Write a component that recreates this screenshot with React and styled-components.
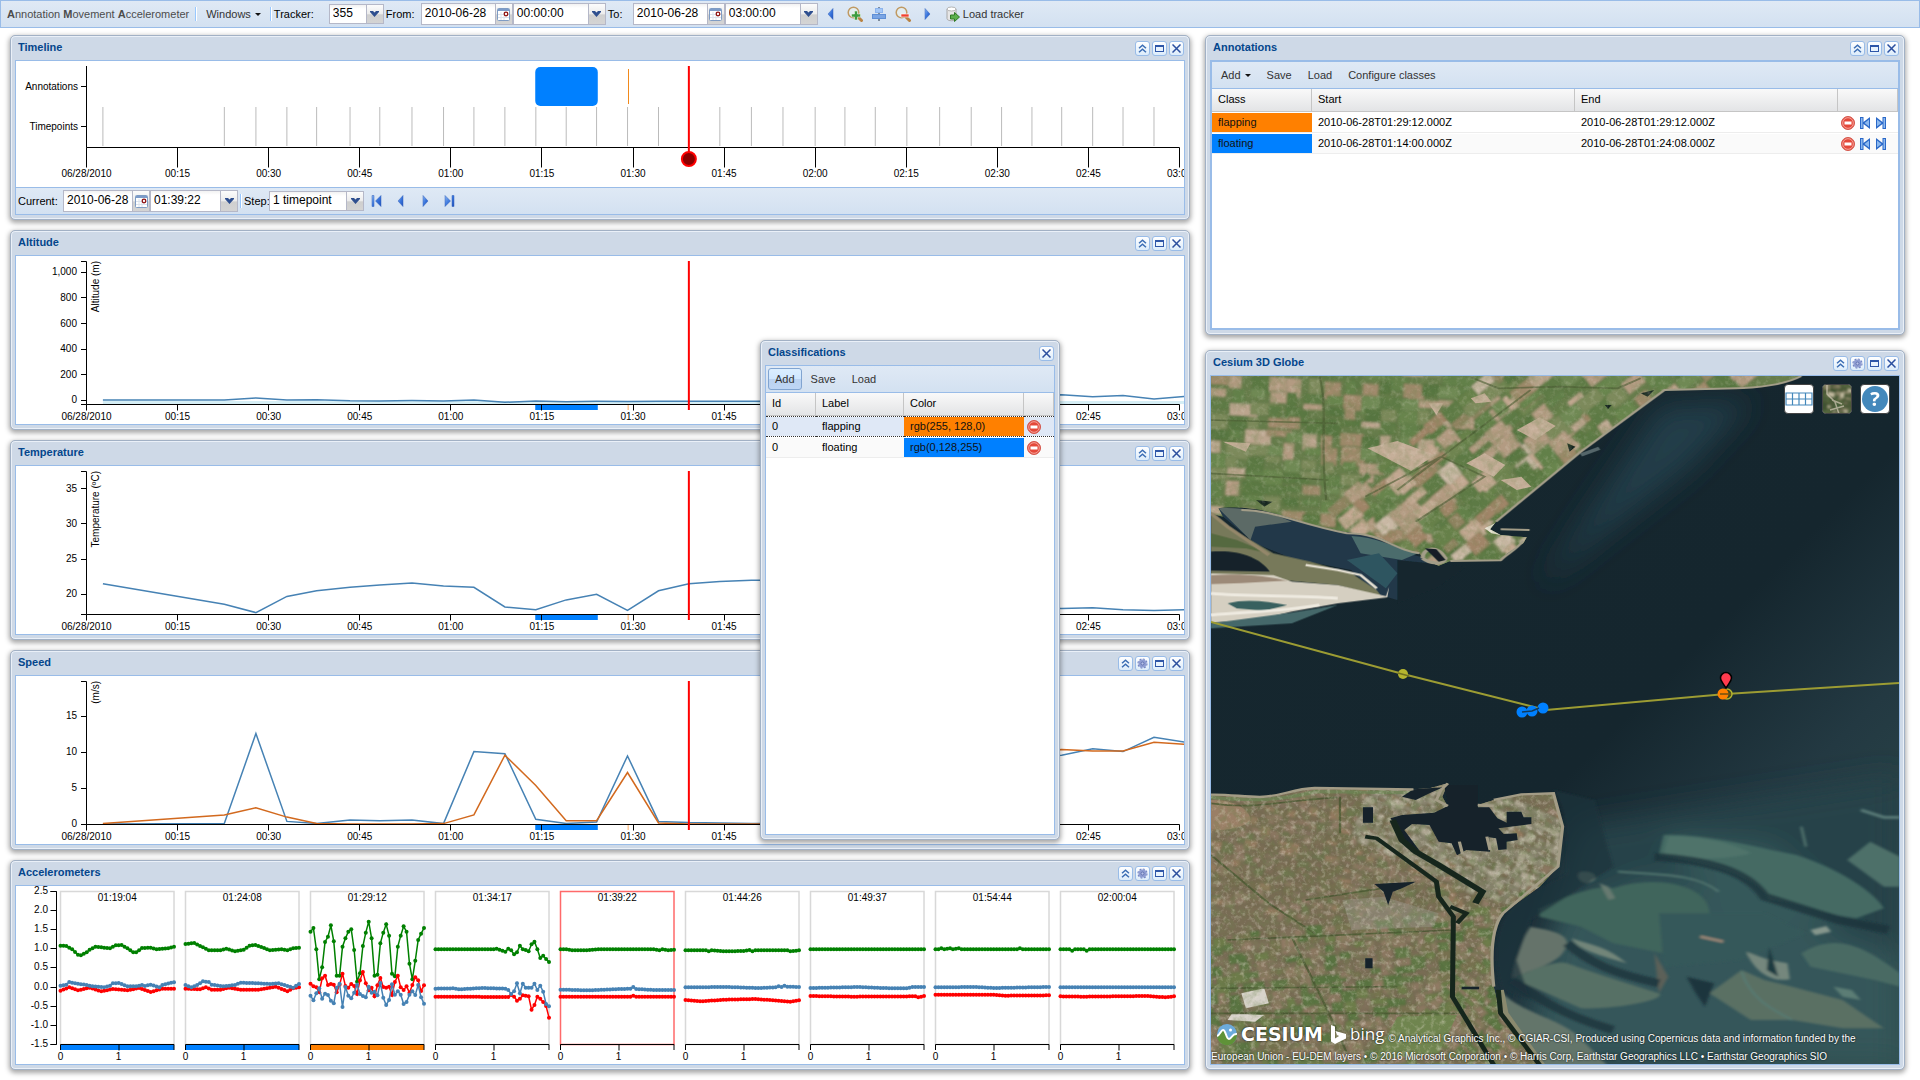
import React from "react";
import styled, { createGlobalStyle, css } from "styled-components";

/* ---------- shared styles ---------- */

const GlobalStyle = createGlobalStyle`
  *, *::before, *::after { box-sizing: border-box; }
  body { margin: 0; background: #fff; }
  body, button, input, select, table {
    font-family: "Liberation Sans", Arial, Helvetica, sans-serif;
    font-size: 11px;
    color: #000;
  }
  button { padding: 0; border: 0; background: none; cursor: pointer; }
  svg { display: block; flex: none; }
  svg text { font-family: "Liberation Sans", Arial, Helvetica, sans-serif; }
`;

const Page = styled.div`
  position: relative;
  min-height: 100vh;
`;

const Desktop = styled.main`
  display: grid;
  grid-template-columns: 59fr 35fr;
  gap: 15px;
  padding: 7px 15px 10px 10px;
`;

const Column = styled.div`
  display: flex;
  flex-direction: column;
  gap: ${(p) => p.$gap};
  min-width: 0;
`;

const Bar = styled.div`
  display: flex;
  align-items: center;
  gap: 2px;
  height: ${(p) => p.$height};
  padding: 0 2px;
  background: linear-gradient(#dfe9f5, #d3e1f1);
`;

const MainBar = styled(Bar)`
  border: 1px solid #99bce8;
  padding-left: 6px;
`;

const PanelBar = styled(Bar)`
  border-bottom: 1px solid #99bce8;
`;

const FooterBar = styled(Bar)`
  border-top: 1px solid #99bce8;
`;

const Brand = styled.span`
  color: #4c4c4c;
  margin-right: 4px;
  white-space: nowrap;
`;

const Divider = styled.span`
  width: 2px;
  height: 14px;
  border-left: 1px solid #98c8ff;
  border-right: 1px solid #fff;
`;

const BarButton = styled.button`
  display: inline-flex;
  align-items: center;
  gap: 4px;
  height: 22px;
  padding: 0 6px;
  color: #333;
  border: 1px solid transparent;
  border-radius: 3px;
  white-space: nowrap;
  ${(p) =>
    p.$pressed &&
    css`
      border-color: #81a4d0;
      background: linear-gradient(#dbeeff, #d0e7ff 48%, #bbd2f0 52%, #bed6f5);
    `}
`;

const LoadButton = styled(BarButton)`
  gap: 2px;
  padding: 0 4px;
`;

const IconButton = styled.button`
  display: inline-flex;
  align-items: center;
  justify-content: center;
  width: 22px;
  height: 22px;
`;

const FieldLabel = styled.label`
  width: ${(p) => p.$width};
  white-space: nowrap;
`;

const FieldBox = styled.span`
  display: flex;
  width: ${(p) => p.$width};
  height: ${(p) => (p.$compact ? "20px" : "22px")};
  background: #fff;
  border: 1px solid #b5b8c8;
  position: relative;

  input, select {
    flex: 1;
    min-width: 0;
    width: 100%;
    height: 100%;
    padding: 0 0 2px 3px;
    border: 0;
    border-radius: 0;
    outline: 0;
    background: linear-gradient(#f2f2f2, #fff 4px);
    font-size: 12px;
    appearance: none;
  }
`;

const triggerFace = css`
  display: flex;
  align-items: center;
  justify-content: center;
  width: 17px;
  border-left: 1px solid #b5b8c8;
  background: linear-gradient(#fcfcfc, #ececec 50%, #cfcfcf 54%, #d4d4d4);
`;

const SelectTrigger = styled.span`
  ${triggerFace}
  position: absolute;
  top: 0;
  right: 0;
  bottom: 0;
  pointer-events: none;
`;

const DateTrigger = styled.button`
  ${triggerFace}
`;

const WindowBox = styled.section`
  display: flex;
  flex-direction: column;
  padding: 0 4px 4px;
  background: #ced9e7;
  border: 1px solid #a2b1c5;
  border-radius: 5px;
  box-shadow: inset 0 0 0 1px #eaf0f8, 0 2px 5px 1px rgba(0, 0, 0, 0.35);
  ${(p) => p.$height && `height: ${p.$height};`}
`;

const FloatingWindow = styled(WindowBox)`
  position: absolute;
  left: 760px;
  top: 340px;
  width: 300px;
`;

const WindowHeader = styled.header`
  display: flex;
  align-items: center;
  justify-content: space-between;
  height: 24px;
  padding: 0 1px 0 3px;
`;

const WindowTitle = styled.h2`
  margin: 0;
  padding-bottom: 2px;
  font-size: 11px;
  line-height: 15px;
  font-weight: bold;
  color: #04468c;
`;

const ToolRow = styled.div`
  display: flex;
  gap: 2px;
`;

const ToolButton = styled.button`
  display: flex;
  align-items: center;
  justify-content: center;
  width: 15px;
  height: 15px;
  border: 1px solid #99bce8;
  border-radius: 3px;
  background: linear-gradient(#fff, #dcecfb);
`;

const WindowBody = styled.div`
  flex: 1;
  display: flex;
  flex-direction: column;
  min-height: 0;
  border: ${(p) => (p.$nested ? "2px" : "1px")} solid #99bce8;
  background: #fff;
`;

const ChartSvg = styled.svg`
  width: 100%;
  height: auto;
  overflow: hidden;
`;

/* ---------- icons ---------- */

const CaretDown = () => (
  <svg width="6" height="3" viewBox="0 0 6 3"><path d="M0 0h6L3 3z" fill="#111" /></svg>
);

const TriggerArrow = () => (
  <svg width="9" height="6" viewBox="0 0 9 6">
    <path d="M0 0h3l1.500 1.500L6 0h3v1L4.500 6 0 1z" fill="#2f4f8f" />
  </svg>
);

const CalendarIcon = () => (
  <svg width="13" height="13" viewBox="0 0 13 13">
    <rect x=".5" y=".5" width="12" height="12" rx="1" fill="#fff" stroke="#7f9cc4" />
    <path d="M1 1h11v2H1z" fill="#7d9cc9" />
    <path d="M4 4v8M7 4v8M1 6.500h11M1 9.500h11" stroke="#dbe2ec" />
    <circle cx="9" cy="6" r="1.800" fill="#fff" stroke="#8e1010" strokeWidth="1.300" />
  </svg>
);

const NAV_SHAPES = {
  prev: "M8 .5v11L3 6z",
  next: "M4 .5v11L9 6z",
  first: "M1 .5h2v11H1zM10 .5v11L4.500 6z",
  last: "M9 .5h2v11H9zM2 .5v11L7.500 6z",
};

const NavIcon = ({ kind }) => (
  <svg width="12" height="12" viewBox="0 0 12 12">
    <linearGradient id={`nav-${kind}`} x1="0" x2="1" y1="0" y2="1">
      <stop offset="0" stopColor="#8db8f4" />
      <stop offset=".5" stopColor="#3a76dd" />
      <stop offset="1" stopColor="#1d50bd" />
    </linearGradient>
    <path d={NAV_SHAPES[kind]} fill={`url(#nav-${kind})`} stroke="#3560b8" strokeWidth=".5" />
  </svg>
);

const RowNavIcon = ({ flip }) => (
  <svg width="12" height="12" viewBox="0 0 12 12">
    <g transform={flip ? "matrix(-1 0 0 1 12 0)" : undefined}>
      <path d="M1 0h3.500v5L11 0v12L4.500 7v5H1z" fill="#2a68c8" />
      <path d="M2 1h1.500v10H2zM10 2.500v7L5.500 6z" fill="#8db9ef" />
    </g>
  </svg>
);

const ZoomIcon = ({ minus }) => (
  <svg width="16" height="16" viewBox="0 0 16 16">
    <path d="M10 10l4.500 4.500" stroke="#b98343" strokeWidth="3" strokeLinecap="round" />
    <circle cx="6.500" cy="6.500" r="5.300" fill="#e3edf0" stroke="#c09a63" strokeWidth="1.500" />
    {minus ? (
      <path d="M6 8h8v3H6z" fill="#f0432f" stroke="#fff" strokeWidth=".6" />
    ) : (
      <path d="M7.500 5h3v3h3v3h-3v3h-3v-3h-3V8h3z" fill="#3d9b3f" stroke="#e5f2e5" strokeWidth=".6" />
    )}
  </svg>
);

const CenterIcon = () => (
  <svg width="14" height="14" viewBox="0 0 14 14">
    <path d="M7 0v14" stroke="#234" />
    <rect x="3.500" y="1.500" width="7" height="4" fill="#a5c8f7" stroke="#8db4ec" />
    <rect x=".5" y="7.500" width="13" height="4" fill="#7aa5e4" stroke="#5f8fd6" />
  </svg>
);

const DatabaseGoIcon = () => (
  <svg width="16" height="16" viewBox="0 0 16 16">
    <path d="M2 3v9.500c0 3 9 3 9 0V3z" fill="#e6e6e6" stroke="#a8a8a8" />
    <ellipse cx="6.500" cy="3" rx="4.500" ry="2" fill="#fff" stroke="#b4b4b4" />
    <path d="M5.500 9h4V6.500l5 4.500-5 4.500V13h-4z" fill="#5cb04c" stroke="#2f7a25" />
  </svg>
);

const DeleteIcon = () => (
  <svg width="14" height="14" viewBox="0 0 14 14">
    <circle cx="7" cy="7" r="6.500" fill="#e4483a" stroke="#d3574c" />
    <circle cx="7" cy="7" r="5.300" fill="none" stroke="#f5a49b" />
    <rect x="3.500" y="5.500" width="7" height="3" fill="#fff" />
  </svg>
);

const TOOL_ICONS = {
  collapse: (
    <svg width="9" height="9" viewBox="0 0 9 9">
      <path d="M1 4.200l3.500-3 3.500 3M1 8.200l3.500-3 3.500 3" fill="none" stroke="#3b6db4" strokeWidth="1.500" />
    </svg>
  ),
  settings: (
    <svg width="11" height="11" viewBox="0 0 11 11">
      <circle cx="5.500" cy="5.500" r="4.500" fill="none" stroke="#7384c2" strokeWidth="1.200" strokeDasharray="2 1.500" />
      <circle cx="5.500" cy="5.500" r="4" fill="#8f9dd2" />
      <circle cx="5.500" cy="5.500" r="1.500" fill="#b9c3e8" stroke="#5868a8" strokeWidth=".8" />
    </svg>
  ),
  maximize: (
    <svg width="9" height="7" viewBox="0 0 9 7">
      <rect x=".5" y=".5" width="8" height="6" fill="#e9f3fd" stroke="#2e56a8" />
      <path d="M0 0h9v2H0z" fill="#2e56a8" />
    </svg>
  ),
  close: (
    <svg width="9" height="9" viewBox="0 0 9 9">
      <path d="M.5.5l8 8M8.500.5l-8 8" stroke="#2b4f9f" strokeWidth="1.500" />
    </svg>
  ),
};

/* ---------- windows and fields ---------- */

const WINDOW_TOOLS = ["collapse", "maximize", "close"];
const CONFIGURABLE_TOOLS = ["collapse", "settings", "maximize", "close"];

const Window = ({ title, tools = WINDOW_TOOLS, nested, height, as: Frame = WindowBox, children }) => (
  <Frame $height={height} aria-label={title}>
    <WindowHeader>
      <WindowTitle>{title}</WindowTitle>
      <ToolRow>
        {tools.map((tool) => (
          <ToolButton key={tool} aria-label={tool}>{TOOL_ICONS[tool]}</ToolButton>
        ))}
      </ToolRow>
    </WindowHeader>
    <WindowBody $nested={nested}>{children}</WindowBody>
  </Frame>
);

const Combo = ({ id, label, value, width, compact }) => (
  <FieldBox $width={width} $compact={compact}>
    <select id={id} aria-label={label} defaultValue={value}>
      <option>{value}</option>
    </select>
    <SelectTrigger><TriggerArrow /></SelectTrigger>
  </FieldBox>
);

const DateField = ({ id, value, width }) => (
  <FieldBox $width={width}>
    <input id={id} type="text" defaultValue={value} />
    <DateTrigger aria-label="Pick a date"><CalendarIcon /></DateTrigger>
  </FieldBox>
);

const FieldPair = styled.span`
  display: flex;
`;

/* ---------- time axis ---------- */

const CHART_WIDTH = 1168;
const AXIS_X = 70.5;
const AXIS_END = 1163.5;
const xAt = (minutes) => AXIS_X + (minutes * (AXIS_END - AXIS_X)) / 180;
const clock = (m) => `0${Math.floor(m / 60)}:${m % 60 === 0 ? "00" : m % 60}`;
const QUARTERS = Array.from({ length: 13 }, (_, i) => i * 15);
const NOW = 99.2;
const FLOATING = [73.9, 84.2];
const FLAPPING = 89.2;

const TIMES = [
  2.7, 22.7, 27.9, 33, 37.9, 43.4, 48.3, 53.6, 58.8, 63.8, 68.9, 74, 79, 84, 89.1, 94.2, 99.2,
  104.3, 109.5, 114.7, 120, 124.9, 129.9, 135.1, 140.5, 145.7, 150.7, 155.7, 160.6, 165.7,
  170.7, 175.8, 181,
];

const TimeAxis = ({ y, tick }) => (
  <g>
    <path d={`M${AXIS_X} ${y}H${AXIS_END}`} stroke="#000" />
    {QUARTERS.map((m) => (
      <g key={m}>
        <path d={`M${Math.floor(xAt(m)) + 0.5} ${y}v${tick}`} stroke="#000" />
        <text x={xAt(m)} y={Math.floor(y) + tick + 10} fontSize="10" textAnchor="middle">
          {m === 0 ? "06/28/2010" : clock(m)}
        </text>
      </g>
    ))}
  </g>
);

const linePath = (values, scale) =>
  values.map((v, i) => `${i ? "L" : "M"}${xAt(TIMES[i]).toFixed(1)} ${scale(v).toFixed(1)}`).join("");

const TimelineChart = () => (
  <ChartSvg viewBox={`0 0 ${CHART_WIDTH} 126`} role="img" aria-label="Timeline">
    <rect x={xAt(FLOATING[0])} y="6" width={xAt(FLOATING[1]) - xAt(FLOATING[0])} height="39" rx="5" fill="#0080ff" />
    <path d={`M${Math.floor(xAt(FLAPPING)) + 0.5} 8v35`} stroke="#f28a1c" />
    {TIMES.filter((t) => t < 180 && t !== NOW).map((t) => (
      <path key={t} d={`M${xAt(t)} 46v39`} stroke="#bbb" />
    ))}
    <path d={`M${AXIS_X} 5V86.500M65 25.500h6M65 65.500h6`} stroke="#000" />
    <text x="62" y="29" fontSize="10" textAnchor="end">Annotations</text>
    <text x="62" y="69" fontSize="10" textAnchor="end">Timepoints</text>
    <TimeAxis y={86.5} tick={20} />
    <path d={`M${xAt(NOW)} 5v88`} stroke="red" strokeWidth="2" />
    <circle cx={xAt(NOW)} cy="98" r="7" fill="#8b0000" stroke="red" strokeWidth="2" />
  </ChartSvg>
);

const LineChart = ({ unit, ticks, scale, series, ground }) => (
  <ChartSvg viewBox={`0 0 ${CHART_WIDTH} 168`} role="img" aria-label={unit}>
    {ground && <path d={`M${xAt(TIMES[0])} 145H1168V148H${xAt(TIMES[0])}z`} fill="#d5eef5" />}
    {series.map((s) => (
      <path key={s.color} d={linePath(s.values, scale)} fill="none" stroke={s.color} strokeWidth="1.500" />
    ))}
    <rect x={xAt(FLOATING[0])} y="148" width={xAt(FLOATING[1]) - xAt(FLOATING[0])} height="6" fill="#0080ff" />
    <rect x={xAt(FLAPPING) - 0.5} y="148" width="1" height="6" fill="#ffb066" />
    <path d={`M65 5.500h5.500V148.500H65`} fill="none" stroke="#000" />
    {ticks.map((v) => (
      <g key={v}>
        <path d={`M65 ${Math.floor(scale(v)) + 0.5}h5.500`} stroke="#000" />
        <text x="61" y={Math.round(scale(v)) + 3} fontSize="10" textAnchor="end">
          {v.toLocaleString("en-US")}
        </text>
      </g>
    ))}
    <text transform="translate(83 5) rotate(-90)" fontSize="10" textAnchor="end">{unit}</text>
    <TimeAxis y={148.5} tick={6} />
    <path d={`M${xAt(NOW)} 5v149`} stroke="red" strokeWidth="2" />
  </ChartSvg>
);

const ALTITUDE = [
  3, 2, 18, 2, 5, -4, -5, -2, -5, 3, -16, -5, -11, -8, -9, -8, -8, -8, -8, -8, -8, -6, 0, 8, 15,
  22, 30, 38, 44, 27, 38, 11, 30,
];
const TEMPERATURE = [
  21.5, 18.6, 17.4, 19.7, 20.5, 21, 21.3, 21.6, 21.2, 21, 18.2, 17.8, 19.2, 20, 17.7, 20.5, 21.5,
  21.8, 22, 22, 21.8, 21.2, 20.5, 19.9, 19.2, 18.8, 18.4, 18.1, 18, 18.1, 17.8, 17.7, 17.8,
];
const SPEED = [
  0.05, 0.1, 12.6, 0.4, 0.1, 0.6, 0.5, 0.6, 0.1, 10.1, 9.8, 0.7, 0.1, 0.3, 9.5, 0.4, 0.25, 0.2, 0.1,
  0.1, 0.1, 0.1, 2, 4, 6, 8, 9, 9.4, 9.6, 10.5, 10.1, 12.1, 11.4,
];
const GROUND_SPEED = [
  0.1, 1.3, 2.3, 1, 0.1, 0.05, 0.05, 0.05, 0.1, 1.3, 9.6, 5.4, 0.5, 0.5, 7.2, 0.2, 0.05, 0.05, 0.05,
  0.05, 0.05, 0.05, 2, 4, 6, 8, 9, 10, 10.4, 10.2, 10.2, 11.4, 11.1,
];

/* ---------- accelerometer bursts ---------- */

// Bursts hold sensor counts; steady ones are stored as [sample, count] key frames.
const fromKeys = (keys) =>
  Array.from({ length: 40 }, (_, i) => {
    const next = keys.findIndex(([k]) => k >= i);
    if (next === -1) return keys[keys.length - 1][1];
    if (next === 0) return keys[0][1];
    const [a, va] = keys[next - 1];
    const [b, vb] = keys[next];
    return va + ((vb - va) * (i - a)) / (b - a);
  });

const BURSTS = [
  {
    time: "01:19:04",
    color: "#0080ff",
    z: fromKeys([[0, 287], [2, 288], [4, 298], [6, 314], [7, 316], [9, 307], [10, 299], [12, 290], [14, 292], [17, 295], [19, 286], [21, 285], [23, 295], [25, 307], [26, 307], [28, 294], [31, 293], [33, 298], [37, 295], [39, 290]]),
    y: fromKeys([[0, 407], [2, 404], [3, 396], [5, 400], [9, 405], [11, 409], [15, 412], [17, 407], [18, 400], [20, 399], [23, 409], [26, 409], [28, 405], [29, 408], [31, 404], [34, 412], [35, 405], [38, 398], [39, 397]]),
    x: fromKeys([[0, 422], [3, 412], [6, 421], [10, 413], [14, 424], [18, 417], [23, 421], [27, 414], [31, 426], [35, 416], [39, 416]]),
  },
  {
    time: "01:24:08",
    color: "#0080ff",
    z: fromKeys([[0, 282], [3, 279], [6, 292], [8, 301], [12, 301], [14, 296], [17, 304], [20, 299], [22, 287], [24, 285], [27, 294], [29, 301], [33, 298], [35, 301], [37, 295], [39, 293]]),
    y: fromKeys([[0, 405], [2, 412], [4, 405], [6, 394], [8, 396], [9, 404], [13, 409], [17, 405], [19, 398], [25, 400], [29, 402], [32, 400], [35, 408], [37, 413], [39, 402]]),
    x: fromKeys([[0, 416], [5, 418], [7, 412], [9, 419], [12, 419], [15, 413], [19, 419], [25, 419], [31, 410], [34, 420], [35, 424], [37, 415], [39, 412]]),
  },
  {
    time: "01:29:12",
    color: "#ff8000",
    z: [245, 234, 298, 388, 352, 276, 260, 226, 274, 377, 377, 290, 265, 245, 238, 300, 395, 370, 288, 248, 215, 265, 377, 374, 280, 248, 223, 257, 371, 379, 290, 257, 229, 245, 341, 388, 332, 270, 251, 234],
    x: [401, 409, 412, 427, 385, 377, 405, 402, 404, 427, 404, 371, 408, 413, 402, 408, 432, 391, 366, 400, 421, 413, 439, 406, 384, 411, 413, 410, 435, 396, 377, 412, 420, 409, 428, 405, 382, 391, 423, 406],
    y: [437, 451, 430, 415, 446, 431, 435, 452, 460, 413, 401, 471, 411, 437, 445, 428, 404, 432, 438, 442, 410, 428, 425, 436, 399, 443, 465, 450, 403, 434, 424, 434, 462, 456, 434, 424, 435, 405, 442, 461],
  },
  {
    time: "01:34:17",
    z: fromKeys([[0, 298], [20, 298], [21, 296], [24, 305], [25, 296], [26, 301], [27, 313], [28, 307], [29, 287], [30, 298], [31, 300], [32, 304], [33, 283], [34, 275], [35, 298], [36, 324], [37, 317], [38, 327], [39, 336]]),
    y: fromKeys([[0, 416], [6, 415], [8, 418], [16, 414], [24, 416], [25, 420], [26, 432], [27, 424], [28, 400], [29, 430], [30, 401], [31, 413], [33, 413], [34, 401], [35, 420], [36, 407], [37, 425], [38, 462], [39, 469]]),
    x: fromKeys([[0, 440], [25, 441], [26, 435], [27, 440], [28, 452], [29, 446], [30, 436], [32, 439], [33, 479], [34, 465], [35, 440], [36, 446], [37, 456], [38, 468], [39, 503]]),
  },
  {
    time: "01:39:22",
    current: true,
    z: fromKeys([[0, 298], [2, 298], [4, 301], [8, 301], [13, 298], [32, 298], [34, 301], [35, 298], [37, 301], [39, 299]]),
    y: fromKeys([[0, 419], [10, 421], [18, 418], [24, 416], [25, 411], [26, 417], [32, 420], [39, 420]]),
    x: fromKeys([[0, 440], [24, 440], [25, 437], [26, 440], [39, 440]]),
  },
  {
    time: "01:44:26",
    z: fromKeys([[0, 301], [7, 301], [8, 304], [9, 301], [13, 304], [20, 303], [22, 300], [23, 304], [24, 301], [35, 301], [36, 304], [39, 301]]),
    y: fromKeys([[0, 412], [14, 411], [25, 414], [31, 412], [32, 409], [33, 411], [34, 407], [35, 410], [39, 411]]),
    x: fromKeys([[0, 450], [5, 454], [14, 449], [24, 447], [32, 452], [36, 455], [39, 451]]),
  },
  {
    time: "01:49:37",
    z: fromKeys([[0, 298], [39, 298]]),
    y: fromKeys([[0, 414], [16, 411], [28, 415], [33, 415], [35, 411], [39, 411]]),
    x: fromKeys([[0, 438], [14, 440], [36, 439], [37, 442], [39, 438]]),
  },
  {
    time: "01:54:44",
    z: fromKeys([[0, 298], [1, 298], [2, 295], [3, 298], [5, 295], [6, 298], [8, 295], [9, 298], [28, 298], [29, 295], [30, 298], [39, 298]]),
    y: fromKeys([[0, 412], [14, 411], [20, 414], [39, 411]]),
    x: fromKeys([[0, 434], [20, 434], [24, 437], [39, 436]]),
  },
  {
    time: "02:00:04",
    z: fromKeys([[0, 298], [3, 298], [4, 302], [5, 298], [8, 298], [9, 302], [10, 298], [39, 298]]),
    y: fromKeys([[0, 412], [39, 412]]),
    x: fromKeys([[0, 439], [8, 440], [30, 438], [36, 442], [39, 439]]),
  },
];

const countY = (count) => count / 3 - 36;
const G_TICKS = [2.5, 2, 1.5, 1, 0.5, 0, -0.5, -1, -1.5];
const gY = (g) => 5.5 + (2.5 - g) * 38.2;
const BURST_WIDTH = 113.5;

const Trace = ({ counts, color }) => {
  const points = counts.map((c, i) => [(i * BURST_WIDTH) / 39, countY(c)]);
  return (
    <g fill={color}>
      <polyline points={points.map((p) => p.join(",")).join(" ")} fill="none" stroke={color} strokeWidth="1.500" />
      {points.map(([x, y]) => <circle key={x} cx={x} cy={y} r="2" />)}
    </g>
  );
};

const Burst = ({ burst, x }) => (
  <g transform={`translate(${x} 0)`}>
    <rect y="5.500" width={BURST_WIDTH} height="153" fill="none" stroke={burst.current ? "#ff6a6a" : "#d8d8d8"} strokeWidth="1.500" />
    <Trace counts={burst.z} color="green" />
    <Trace counts={burst.x} color="red" />
    <Trace counts={burst.y} color="steelblue" />
    {burst.color && <rect y="159" width={BURST_WIDTH} height="5" fill={burst.color} />}
    <path d={`M0 164v-5.500H${BURST_WIDTH}v5.500M58.500 158.500v6`} fill="none" stroke="#000" />
    <text x={BURST_WIDTH / 2} y="15" fontSize="10" textAnchor="middle">{burst.time}</text>
    <text x="0" y="174" fontSize="10" textAnchor="middle">0</text>
    <text x="58" y="174" fontSize="10" textAnchor="middle">1</text>
  </g>
);

const AccelerometerChart = () => (
  <ChartSvg viewBox={`0 0 ${CHART_WIDTH} 178`} role="img" aria-label="Accelerometers">
    <path d="M34.500 5.500H40.500V158.500H34.500" fill="none" stroke="#000" />
    {G_TICKS.map((g) => (
      <g key={g}>
        <path d={`M34.500 ${Math.floor(gY(g)) + 0.5}h6`} stroke="#000" />
        <text x="32" y={Math.floor(gY(g)) + 3} fontSize="10" textAnchor="end">{g.toFixed(1)}</text>
      </g>
    ))}
    {BURSTS.map((burst, i) => <Burst key={burst.time} burst={burst} x={44.5 + i * 125} />)}
  </ChartSvg>
);

/* ---------- tables ---------- */

const Grid = styled.table`
  width: 100%;
  table-layout: fixed;
  border-collapse: separate;
  border-spacing: 0;

  th {
    height: 23px;
    padding: 0 6px 2px;
    text-align: left;
    font-weight: normal;
    background: linear-gradient(#f9f9f9, #e3e4e6);
    border-right: 1px solid #c5c5c5;
    border-bottom: 1px solid #c5c5c5;
  }
  td {
    height: 21px;
    padding: 0 6px 2px;
    border-bottom: 1px solid #ededed;
    border-top: 1px solid transparent;
    background-clip: padding-box;
    white-space: nowrap;
  }
  tbody tr:nth-child(2) td { background-color: #fafafa; }
`;

const Row = styled.tr`
  ${(p) =>
    p.$selected &&
    css`
      td {
        background-color: #dfe8f6;
        border-top: 1px dotted #333;
        border-bottom: 1px dotted #333;
      }
    `}
`;

const ClassCell = styled.td`
  && {
    background-color: ${(p) => p.$color} !important;
    color: #111;
  }
`;

const ActionCell = styled.td`
  && { padding: 0 3px; }
`;

const Actions = styled.span`
  display: flex;
  align-items: center;
  gap: 4px;

  button { display: block; }
`;

const ANNOTATIONS = [
  { name: "flapping", color: "#ff8000", start: "2010-06-28T01:29:12.000Z", end: "2010-06-28T01:29:12.000Z" },
  { name: "floating", color: "#0080ff", start: "2010-06-28T01:14:00.000Z", end: "2010-06-28T01:24:08.000Z" },
];

const AnnotationsWindow = () => (
  <Window title="Annotations" nested height="300px">
    <PanelBar $height="27px">
      <BarButton>Add <CaretDown /></BarButton>
      <BarButton>Save</BarButton>
      <BarButton>Load</BarButton>
      <BarButton>Configure classes</BarButton>
    </PanelBar>
    <Grid>
      <colgroup>
        <col width="100" /><col /><col /><col width="60" />
      </colgroup>
      <thead>
        <tr><th>Class</th><th>Start</th><th>End</th><th aria-label="Actions" /></tr>
      </thead>
      <tbody>
        {ANNOTATIONS.map((a) => (
          <Row key={a.name}>
            <ClassCell $color={a.color}>{a.name}</ClassCell>
            <td>{a.start}</td>
            <td>{a.end}</td>
            <ActionCell>
              <Actions>
                <button aria-label="Delete"><DeleteIcon /></button>
                <button aria-label="Go to start"><RowNavIcon /></button>
                <button aria-label="Go to end"><RowNavIcon flip /></button>
              </Actions>
            </ActionCell>
          </Row>
        ))}
      </tbody>
    </Grid>
  </Window>
);

const CLASSES = [
  { id: 0, label: "flapping", value: "rgb(255, 128,0)", color: "#ff8000", selected: true },
  { id: 0, label: "floating", value: "rgb(0,128,255)", color: "#0080ff" },
];

const ClassificationsWindow = () => (
  <Window title="Classifications" tools={["close"]} height="500px" as={FloatingWindow}>
    <PanelBar $height="27px">
      <BarButton $pressed>Add</BarButton>
      <BarButton>Save</BarButton>
      <BarButton>Load</BarButton>
    </PanelBar>
    <Grid>
      <colgroup>
        <col width="50" /><col width="88" /><col width="120" /><col />
      </colgroup>
      <thead>
        <tr><th>Id</th><th>Label</th><th>Color</th><th aria-label="Actions" /></tr>
      </thead>
      <tbody>
        {CLASSES.map((c) => (
          <Row key={c.label} $selected={c.selected}>
            <td>{c.id}</td>
            <td>{c.label}</td>
            <ClassCell $color={c.color}>{c.value}</ClassCell>
            <ActionCell>
              <Actions><button aria-label="Delete"><DeleteIcon /></button></Actions>
            </ActionCell>
          </Row>
        ))}
      </tbody>
    </Grid>
  </Window>
);

/* ---------- globe ---------- */

const Globe = styled.div`
  position: relative;
  flex: 1;
  min-height: 688px;
  overflow: hidden;
  background: #15262e;
`;

const GlobeMap = styled.svg`
  width: 100%;
  height: 100%;
  position: absolute;
  inset: 0;
`;

const GlobeTools = styled.div`
  position: absolute;
  top: 8px;
  right: 9px;
  display: flex;
  gap: 8px;
`;

const GlobeButton = styled.button`
  display: flex;
  align-items: center;
  justify-content: center;
  width: 30px;
  height: 30px;
  border: 1px solid #444;
  border-radius: 4px;
  background: #fff;
  overflow: hidden;
`;

const Credits = styled.div`
  position: absolute;
  left: 0;
  right: 0;
  bottom: 0;
  color: #fff;
  font-size: 10px;
  line-height: 14px;
  text-shadow: 0 0 2px #000;
`;

const CreditLine = styled.div`
  display: flex;
  align-items: center;
  gap: 4px;
  height: ${(p) => p.$height};
  padding-left: ${(p) => p.$indent};
  white-space: nowrap;
`;

const CreditText = styled.span`
  align-self: flex-end;
  line-height: 22px;
`;

const CesiumName = styled.span`
  font-family: "DejaVu Sans", sans-serif;
  font-size: 19px;
  font-weight: bold;
  margin-right: 4px;
`;

const BingName = styled.span`
  font-family: "Open Sans", sans-serif;
  font-size: 17px;
`;

const seeded = (seed) => () => {
  seed = (seed * 16807) % 2147483647;
  return seed / 2147483647;
};

const FARM = ["#5d7a44", "#68854d", "#56753f", "#6f8a55", "#a08a6c", "#b39b82", "#7d8a5c", "#5a7842", "#62804a", "#bba58e"];
const DRY = ["#b39b82", "#c2a891", "#a08568", "#8f8361", "#5d7a44", "#c9b8a4", "#6f8551", "#668049"];
const TOWN = ["#80705b", "#8a7660", "#7c6d54", "#766d50", "#8f7a66", "#6f7450", "#93795f", "#7a6c54"];
const MIXED = ["#5f7544", "#7f705a", "#6d7a4a", "#8a7761", "#587240", "#77704f", "#8f7a64"];
const PORT = ["#8e8772", "#a19a86", "#7f7b64", "#b0a894", "#8a8470"];

const patches = (seed, palette, box, cell, angle) => {
  const next = seeded(seed);
  const [x0, y0, x1, y1] = box;
  const out = [];
  for (let y = y0; y < y1; y += cell * 0.7) {
    for (let x = x0; x < x1; x += cell) {
      out.push(
        <rect
          key={`${x}-${y}`}
          x={x + next() * 5}
          y={y + next() * 4}
          width={cell * (0.5 + next())}
          height={cell * (0.3 + next() * 0.7)}
          fill={palette[Math.floor(next() * palette.length)]}
          stroke="#4f5f3b"
          strokeOpacity=".35"
          strokeWidth=".6"
        />
      );
    }
  }
  return <g transform={`rotate(${angle} ${(x0 + x1) / 2} ${(y0 + y1) / 2})`}>{out}</g>;
};

const NORTH = "translate(-11 -36) scale(.459 .3333)";
const SOUTH = "translate(-11 324) scale(.459 .3333)";

const Imagery = () => (
  <g>
    <defs>
      <clipPath id="north-land">
        <path transform={NORTH} d="M20 100H1320C1290 125 1240 142 1170 146L1012 150 830 335 645 545 632 568 655 585 712 592 704 610 670 640 655 661 545 663 520 677 490 660 478 640C430 630 410 590 350 582 250 565 200 530 140 512 90 500 60 500 40 505L50 530 20 520z" />
      </clipPath>
      <clipPath id="south-land">
        <path transform={SOUTH} d="M20 284C60 282 90 290 130 293 180 292 200 268 250 265L465 268 500 265 540 250 528 290 540 320 605 315 640 300 700 283 770 280 790 380 780 500 740 560 660 640C635 680 632 760 640 860L652 930 745 1100H20z" />
      </clipPath>
      <linearGradient id="sea" x1="0" y1="0" x2="1" y2="1">
        <stop offset="0" stopColor="#16272f" />
        <stop offset=".55" stopColor="#15262e" />
        <stop offset=".72" stopColor="#233942" />
        <stop offset="1" stopColor="#30504f" />
      </linearGradient>
      <filter id="soft" x="-5%" y="-5%" width="110%" height="110%"><feGaussianBlur stdDeviation="1" /></filter>
      <filter id="shoal" x="-5%" y="-5%" width="110%" height="110%"><feGaussianBlur stdDeviation="3" /></filter>
      <filter id="haze" x="-20%" y="-20%" width="140%" height="140%"><feGaussianBlur stdDeviation="14" /></filter>
      <filter id="grain" x="0" y="0" width="100%" height="100%">
        <feTurbulence type="fractalNoise" baseFrequency=".12" numOctaves="4" seed="7" />
        <feColorMatrix values="0 0 0 0 .16  0 0 0 0 .24  0 0 0 0 .08  1.800 0 0 0 -.7" />
      </filter>
      <filter id="sparkle" x="0" y="0" width="100%" height="100%">
        <feTurbulence type="fractalNoise" baseFrequency=".2" numOctaves="3" seed="21" />
        <feColorMatrix values="0 0 0 0 .86  0 0 0 0 .8  0 0 0 0 .7  0 2.400 0 0 -1.150" />
      </filter>
    </defs>

    <rect width="688" height="688" fill="url(#sea)" />
    <g filter="url(#haze)">
      <path d="M450 30L540 25 480 90 390 160 330 210z" fill="#243e49" />
      <path d="M370 450L688 400V688H300z" fill="#284249" />
      <path d="M345 540L440 500 688 580V688H320z" fill="#34575a" />
      <path d="M450 460L560 470 640 540 530 560z" fill="#35585a" />
    </g>

    <g transform={SOUTH} filter="url(#shoal)">
      <path d="M1010 405C1100 400 1200 440 1300 465 1400 510 1470 580 1490 625L1430 655C1350 640 1290 600 1240 600 1220 540 1150 500 1000 465z" fill="#446a64" />
      <path d="M1020 410C1100 405 1180 440 1200 460 1150 480 1060 480 1010 462z" fill="#50736a" />
      <path d="M1460 425L1525 470V560L1490 560 1410 480z" fill="#4d7069" />
      <path d="M1440 330L1490 352H1525" fill="none" stroke="#5b7d79" strokeWidth="8" />
      <path d="M740 625C780 600 860 550 900 565 1000 520 1110 560 1110 640L1100 700 1010 760 900 730 830 680 740 650z" fill="#40655c" />
      <path d="M1000 640L1230 640 1320 700 1180 780 1010 800z" fill="#36585a" />
      <path d="M720 680C760 690 800 700 800 730 790 790 740 800 680 835 680 800 700 720 720 680z" fill="#65736a" />
      <path d="M680 835C740 800 780 780 800 790 860 820 930 850 1000 880 1020 900 900 930 830 925z" fill="#566f65" />
      <path d="M810 715C860 740 880 735 930 790 880 770 820 750 810 715zM830 515C860 510 880 540 840 550 820 540 820 520 830 515z" fill="#728579" />
      <path d="M870 550L890 560 905 595 890 600z" fill="#66796f" />
      <path d="M1310 760C1380 700 1440 730 1525 820V860L1470 840 1330 800z" fill="#496b64" />
      <path d="M1110 880L1180 810 1230 840 1290 860 1400 900 1490 985 1400 985 1290 960 1200 960z" fill="#5a7064" />
      <path d="M1190 755C1200 790 1230 850 1285 838L1280 790 1240 780z" fill="#74877d" />
      <path d="M1240 740L1260 830 1235 810z" fill="#1e3a40" />
      <path d="M1330 690L1365 678 1375 695 1340 706z" fill="#85968c" />
      <path d="M1090 710L1140 725" stroke="#a08a78" strokeWidth="7" />
      <path d="M990 760L1020 830 1000 880z" fill="#6c6557" opacity=".7" />
      <path d="M800 730C850 790 900 820 1000 850M680 840C740 900 800 950 900 990M990 470C1100 480 1190 510 1230 590L1390 660 1500 690" fill="none" stroke="#1b333b" strokeWidth="24" opacity=".75" />
      <path d="M910 515C1000 525 1080 520 1130 575M1310 380L1320 440M1180 815C1200 900 1250 930 1290 960" fill="none" stroke="#587b73" strokeWidth="5" />
      <path d="M1060 830L1120 850 1100 920 1080 880z" fill="#1d363d" />
      <path d="M1380 860L1420 870 1440 900 1400 890z" fill="#5c7d74" />
      <path d="M660 880C700 940 800 960 840 1030L890 1100H740L650 930z" fill="#64756a" />
      <path d="M770 270C800 330 800 400 800 520 760 560 720 560 670 640 640 700 640 800 660 870L720 900 690 780 720 660 900 500 860 300z" fill="#1b323b" opacity=".7" />
    </g>

    <g transform={NORTH} filter="url(#soft)">
      <path d="M24 500C80 500 140 515 320 580L350 585C410 600 420 630 480 650L560 690 430 780 380 760 330 690 200 655 120 610z" fill="#24394a" />
      <path d="M430 660L580 680 520 740 430 790z" fill="#16272f" filter="url(#soft)" />
      <path d="M40 505C100 500 160 520 200 545L120 560 110 600z" fill="#5c6a66" />
      <path d="M330 588C380 590 420 620 475 640L440 660 350 640z" fill="#4b6c6c" />
      <path d="M320 660L390 640 430 700 405 745 360 700z" fill="#2f5560" />
    </g>

    <g clipPath="url(#north-land)">
      <rect width="688" height="360" fill="#667c4b" />
      <g filter="url(#soft)">
        {patches(11, FARM, [-10, -10, 270, 350], 19, 3)}
        {patches(29, DRY, [150, 20, 420, 230], 21, -40)}
        {patches(5, FARM, [260, -90, 600, 60], 23, -38)}
      </g>
      <g transform={NORTH} fill="#c5ae98" filter="url(#soft)">
        <path d="M365 325L430 303 512 345 460 393zM690 270L740 232 775 258 730 300zM580 370L620 340 665 375 640 410z" />
        <path d="M498 190L530 190 515 225zM590 175L620 160 635 185 600 190zM655 420L700 410 722 440 690 450zM50 305L110 310 100 335z" />
        <path d="M620 565L650 545 655 585 635 580z" fill="#ece5d8" />
      </g>
      <g transform={NORTH} fill="none" stroke="#46572f" strokeWidth="5" opacity=".6">
        <path d="M590 112L650 145 780 140 910 145 960 115M525 350L620 410 470 545M525 350L360 470M525 350L430 450 720 150M260 110C280 200 260 300 275 480M20 240L300 250M20 400L280 420" />
      </g>
      <g transform={NORTH} fill="#15251f">
        <path d="M122 480L158 485 140 500zM800 310L818 320 805 335zM882 195l15 0-8 12zM960 160l30-10-15 20z" />
      </g>
      <rect width="688" height="360" filter="url(#grain)" opacity=".4" />
      <rect width="688" height="360" filter="url(#sparkle)" opacity=".2" />
    </g>

    <g transform={NORTH} filter="url(#soft)">
      <path d="M24 515L60 560 160 640 240 665 330 700 385 750 395 768 300 735 180 720 24 712z" fill="#77795a" />
      <path d="M24 580L80 600 150 640 100 625 24 620z" fill="#54693f" />
      <path d="M24 520L60 560 150 645" fill="none" stroke="#94876b" strokeWidth="9" />
      <path d="M24 635C80 628 130 650 152 695L24 692z" fill="#14232b" />
      <path d="M24 700L160 705 200 725 300 735 405 768 412 740 408 772 300 790 200 815 120 840 24 848z" fill="#d5cfc1" />
      <path d="M24 706C90 699 150 709 190 722L90 729 24 732z" fill="#9c8a78" />
      <path d="M60 790C100 775 150 785 190 795L140 812 80 805z" fill="#39605f" />
      <path d="M24 760C100 770 200 765 300 775M24 825C100 815 180 815 260 795" fill="none" stroke="#eeeae0" strokeWidth="9" />
      <path d="M24 850L200 818 300 795 200 850 24 865z" fill="#45686a" />
      <path d="M230 675L300 690 350 705 385 745" fill="none" stroke="#e5e0d2" strokeWidth="7" />
    </g>
    <g transform={NORTH} fill="none" stroke="#a39d88" strokeWidth="6" filter="url(#soft)">
      <path d="M1310 108C1280 130 1230 142 1170 145L1012 150 830 335 645 545M655 568L718 570M704 602C690 630 670 640 655 661L545 663M90 510C160 510 210 550 320 580 400 580 420 630 478 640" />
      <path d="M485 655C485 620 520 615 535 655 530 675 500 672 485 655" strokeWidth="9" />
      <path d="M490 625L515 628 535 660 520 665z" fill="#121f26" stroke="none" />
      <path d="M830 345L870 325" stroke="#54666a" strokeWidth="10" />
    </g>

    <g clipPath="url(#south-land)">
      <rect y="400" width="360" height="290" fill="#786c54" />
      <g filter="url(#soft)">
        {patches(77, TOWN, [-10, 400, 370, 560], 11, 12)}
        {patches(41, MIXED, [-10, 540, 380, 700], 14, -6)}
        {patches(19, PORT, [150, 405, 370, 500], 9, 24)}
        {patches(93, MIXED, [260, 490, 345, 690], 12, 40)}
      </g>
      <g transform={SOUTH} filter="url(#soft)">
        <path d="M310 600L400 590 520 640 510 680 330 690z" fill="#9a958a" opacity=".5" />
        <path d="M90 880L140 865 150 910 100 925zM70 940L140 945 120 965 60 960z" fill="#d8d3cb" />
        <path d="M430 950L560 945 520 1060 380 1080z" fill="#708550" />
        <path d="M24 300C90 300 110 340 110 360 90 390 40 395 24 385z" fill="#9a7f66" />
      </g>
      <g transform={SOUTH} fill="none" stroke="#46542f" strokeWidth="5" opacity=".8">
        <path d="M24 465L150 610 250 700M305 290L305 400M200 710C230 800 270 900 320 1060M24 865L430 860M24 940L560 940M230 600L420 560M60 720L550 690M24 310C130 330 180 300 300 292" />
        <path d="M20 292C120 304 180 300 250 275L460 278" stroke="#6d8455" strokeWidth="10" />
      </g>
      <rect y="400" width="360" height="288" filter="url(#grain)" opacity=".5" />
      <rect y="400" width="360" height="288" filter="url(#sparkle)" opacity=".4" />
    </g>

    <g transform={SOUTH} fill="#14232c" filter="url(#soft)">
      <path d="M415 355L440 345 510 338 540 318 532 255 606 255 606 322 630 322 648 355 668 368 668 335 700 335 705 352 722 352 722 372 650 385 662 402 690 400 692 420 668 425 668 448 650 450 645 415 630 412 632 455 580 450 560 466 548 430 520 425 500 375 462 372 445 390 480 455 460 455z" />
      <path d="M355 322h22v46h-22zM440 290L465 268 530 262 500 280 470 300zM570 860h38v8h-38z" />
      <path d="M360 775h16v30h-16zM380 552L470 545 440 565 420 575 410 615 400 575z" />
    </g>
    <g transform={SOUTH} fill="none" stroke="#a39c86" strokeWidth="7" filter="url(#soft)">
      <path d="M540 250L525 270 515 300 540 318M605 315L640 318M565 425L572 462M625 410L632 450M20 284C60 282 90 290 130 291 180 290 200 266 250 264L465 268M640 300L700 283 770 280 790 380 780 500 660 640C636 680 632 760 640 860" />
      <path d="M530 590L560 640M655 870L665 940 745 1095" strokeWidth="14" stroke="#8b8a6e" />
    </g>
    <g transform={SOUTH} fill="none" stroke="#17271f" strokeWidth="11" filter="url(#soft)">
      <path d="M360 410L385 415 515 545 520 590 552 650 550 890 640 1095" />
      <path d="M420 360L440 420 470 455 520 495 615 575 600 610" strokeWidth="15" />
      <path d="M545 620L580 640 560 670M650 870L655 940 740 1095" />
    </g>
  </g>
);

const TrackOverlay = () => (
  <g>
    <path d="M0 246L192 298 335 334 515 318 688 307" fill="none" stroke="#9c9c33" strokeWidth="2" />
    <circle cx="192" cy="298" r="5" fill="#b5b52f" />
    <path d="M187 297l11 3" stroke="#6f6f20" strokeWidth="1.500" />
    <g fill="#0080ff">
      <circle cx="311" cy="336" r="5.500" />
      <circle cx="321" cy="335" r="5.500" />
      <circle cx="332" cy="332" r="5.500" />
    </g>
    <path d="M311 336l10-1 7-3" stroke="#123a5a" strokeWidth="1.500" fill="none" />
    <circle cx="516" cy="318" r="5" fill="#3c4a22" stroke="#b5b52f" strokeWidth="1.500" />
    <circle cx="512" cy="318" r="5.500" fill="#ff8000" />
    <path d="M509 318h11" stroke="#6f5010" strokeWidth="1.500" />
    <path d="M515 312C512 307 509.500 305 509.500 302a5.500 5.500 0 0 1 11 0c0 3-2.500 5-5.500 10z" fill="#ff3b4e" stroke="#000" strokeWidth="1.500" />
  </g>
);

const SceneModeIcon = () => (
  <svg width="28" height="14" viewBox="0 0 28 14">
    <path d="M1 1h26v12H1zM1 7h26M7.500 1v12M14 1v12M20.500 1v12" fill="none" stroke="#4488bb" strokeWidth="1.200" />
  </svg>
);

const AerialIcon = () => (
  <svg width="30" height="30" viewBox="0 0 30 30">
    <rect width="30" height="30" fill="#4c5a38" />
    <g filter="url(#soft)">{patches(63, ["#3f5230", "#56683f", "#8b8468", "#c2b99f", "#48603a", "#6d6b50"], [-2, -2, 32, 32], 6, 12)}</g>
    <path d="M5 0v10l8 8 4 12M10 16l10 4M8 26l14-4" fill="none" stroke="#d0c8b4" strokeWidth="1.500" opacity=".7" />
  </svg>
);

const HelpIcon = styled.span`
  width: 26px;
  height: 26px;
  border-radius: 50%;
  background: #4488bb;
  color: #fff;
  font: bold 20px/26px "Open Sans", sans-serif;
`;

const CesiumLogo = () => (
  <svg width="20" height="21" viewBox="0 0 20 21">
    <ellipse cx="10" cy="10.500" rx="10" ry="10.500" fill="#6caadb" />
    <path d="M0 12c3-1 4-6 6-6 3 0 3 9 6 9s3-6 8-5c0 15-19 14-20 2z" fill="#5f9238" />
    <path d="M0 12c3-1 4-6 6-6 3 0 3 9 6 9s3-6 8-5" fill="none" stroke="#fff" strokeWidth="2" />
    <circle cx="13.500" cy="6" r="1.500" fill="#fff" />
  </svg>
);

const BingLogo = () => (
  <svg width="15" height="19" viewBox="0 0 15 19">
    <path d="M0 0l4 1.500v12l4-2.500-2-1-1.500-4L15 9v4.500L4 19l-4-2.500z" fill="#fff" />
  </svg>
);

const GlobeWindow = () => (
  <Window title="Cesium 3D Globe" tools={CONFIGURABLE_TOOLS}>
    <Globe>
      <GlobeMap viewBox="0 0 688 688" preserveAspectRatio="xMidYMid slice" role="img" aria-label="Satellite map">
        <Imagery />
        <TrackOverlay />
      </GlobeMap>
      <GlobeTools>
        <GlobeButton aria-label="Scene mode"><SceneModeIcon /></GlobeButton>
        <GlobeButton aria-label="Imagery"><AerialIcon /></GlobeButton>
        <GlobeButton aria-label="Help"><HelpIcon>?</HelpIcon></GlobeButton>
      </GlobeTools>
      <Credits>
        <CreditLine $height="32px" $indent="6px">
          <CesiumLogo />
          <CesiumName>CESIUM</CesiumName>
          <BingLogo />
          <BingName>bing</BingName>
          <CreditText>© Analytical Graphics Inc., © CGIAR-CSI, Produced using Copernicus data and information funded by the</CreditText>
        </CreditLine>
        <CreditLine $height="14px" $indent="0px">
          European Union - EU-DEM layers • © 2016 Microsoft Corporation • © Harris Corp, Earthstar Geographics LLC • Earthstar Geographics SIO
        </CreditLine>
      </Credits>
    </Globe>
  </Window>
);

/* ---------- page ---------- */

const MainToolbar = () => (
  <MainBar as="header" $height="28px">
    <Brand>
      <b>A</b>nnotation <b>M</b>ovement <b>A</b>ccelerometer
    </Brand>
    <Divider />
    <BarButton>Windows <CaretDown /></BarButton>
    <Divider />
    <FieldLabel htmlFor="tracker" $width="53px">Tracker:</FieldLabel>
    <Combo id="tracker" value="355" width="55px" compact />
    <FieldLabel htmlFor="from-date" $width="33px">From:</FieldLabel>
    <FieldPair>
      <DateField id="from-date" value="2010-06-28" width="92px" />
      <Combo label="From time" value="00:00:00" width="93px" />
    </FieldPair>
    <FieldLabel htmlFor="to-date" $width="23px">To:</FieldLabel>
    <FieldPair>
      <DateField id="to-date" value="2010-06-28" width="92px" />
      <Combo label="To time" value="03:00:00" width="93px" />
    </FieldPair>
    <IconButton aria-label="Earlier"><NavIcon kind="prev" /></IconButton>
    <IconButton aria-label="Zoom in"><ZoomIcon /></IconButton>
    <IconButton aria-label="Center"><CenterIcon /></IconButton>
    <IconButton aria-label="Zoom out"><ZoomIcon minus /></IconButton>
    <IconButton aria-label="Later"><NavIcon kind="next" /></IconButton>
    <LoadButton><DatabaseGoIcon /> Load tracker</LoadButton>
  </MainBar>
);

const TimelineToolbar = () => (
  <FooterBar $height="27px">
    <FieldLabel htmlFor="current-date" $width="43px">Current:</FieldLabel>
    <FieldPair>
      <DateField id="current-date" value="2010-06-28" width="87px" />
      <Combo label="Current time" value="01:39:22" width="88px" />
    </FieldPair>
    <Divider />
    <FieldLabel htmlFor="step" $width="23px">Step:</FieldLabel>
    <Combo id="step" value="1 timepoint" width="95px" compact />
    <IconButton aria-label="First"><NavIcon kind="first" /></IconButton>
    <IconButton aria-label="Previous"><NavIcon kind="prev" /></IconButton>
    <IconButton aria-label="Next"><NavIcon kind="next" /></IconButton>
    <IconButton aria-label="Last"><NavIcon kind="last" /></IconButton>
  </FooterBar>
);

export default function App() {
  return (
    <Page>
      <GlobalStyle />
      <MainToolbar />
      <Desktop>
        <Column $gap="10px">
          <Window title="Timeline">
            <TimelineChart />
            <TimelineToolbar />
          </Window>
          <Window title="Altitude">
            <LineChart
              unit="Altitude (m)"
              ticks={[0, 200, 400, 600, 800, 1000]}
              scale={(v) => 144.3 - v * 0.128}
              series={[{ color: "steelblue", values: ALTITUDE }]}
              ground
            />
          </Window>
          <Window title="Temperature">
            <LineChart
              unit="Temperature (ºC)"
              ticks={[20, 25, 30, 35]}
              scale={(v) => 128.3 - (v - 20) * 7.04}
              series={[{ color: "steelblue", values: TEMPERATURE }]}
            />
          </Window>
          <Window title="Speed" tools={CONFIGURABLE_TOOLS}>
            <LineChart
              unit="(m/s)"
              ticks={[0, 5, 10, 15]}
              scale={(v) => 148.3 - v * 7.2}
              series={[
                { color: "steelblue", values: SPEED },
                { color: "#d2691e", values: GROUND_SPEED },
              ]}
            />
          </Window>
          <Window title="Accelerometers" tools={CONFIGURABLE_TOOLS}>
            <AccelerometerChart />
          </Window>
        </Column>
        <Column $gap="15px">
          <AnnotationsWindow />
          <GlobeWindow />
        </Column>
      </Desktop>
      <ClassificationsWindow />
    </Page>
  );
}
